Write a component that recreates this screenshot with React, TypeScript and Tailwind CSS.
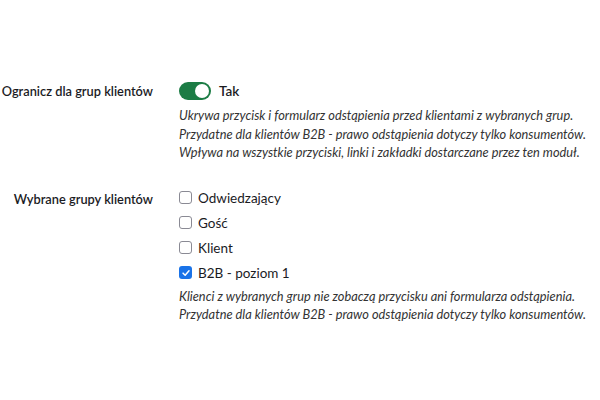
import React from "react";

function Check({ checked }: { checked?: boolean }) {
  return checked ? (
    <span className="flex h-[13px] w-[13px] items-center justify-center rounded-[3px] bg-[#1a73e8]">
      <svg viewBox="0 0 12 12" className="h-[10px] w-[10px]" fill="none" stroke="white" strokeWidth="1.8" strokeLinecap="round" strokeLinejoin="round">
        <path d="M2.5 6.2 L5 8.6 L9.6 3.4" />
      </svg>
    </span>
  ) : (
    <span className="block h-[13px] w-[13px] rounded-[3px] border border-[#8a8a94] bg-white" />
  );
}

export default function App() {
  const items = [
    { label: "Odwiedzający", checked: false },
    { label: "Gość", checked: false },
    { label: "Klient", checked: false },
    { label: "B2B - poziom 1", checked: true },
  ];
  return (
    <div
      className="h-[400px] w-[600px] whitespace-nowrap bg-white text-[#1b1b1f]"
      style={{ fontFamily: 'Lato, "Noto Sans", sans-serif' }}
    >
      <div className="flex flex-col gap-[27px] pt-[81px]">
        <div className="flex">
          <div className="w-[153px] shrink-0 pt-[1px] text-right text-[12.8px] font-semibold leading-[18px]">
            Ogranicz dla grup klientów
          </div>
          <div className="ml-[26px] flex flex-col">
            <div className="flex items-center gap-[8px]">
              <span className="flex h-[18px] w-[32px] items-center justify-end rounded-full bg-[#1c7c45] pr-[2px]">
                <span className="block h-[14px] w-[14px] rounded-full bg-white" />
              </span>
              <span className="text-[13.5px] font-semibold leading-[20px]">Tak</span>
            </div>
            <div className="mt-[5px] text-[12.8px] italic leading-[18.5px] text-[#333]">
              <div>Ukrywa przycisk i formularz odstąpienia przed klientami z wybranych grup.</div>
              <div>Przydatne dla klientów B2B - prawo odstąpienia dotyczy tylko konsumentów.</div>
              <div>Wpływa na wszystkie przyciski, linki i zakładki dostarczane przez ten moduł.</div>
            </div>
          </div>
        </div>
        <div className="flex">
          <div className="w-[153px] shrink-0 pt-[1px] text-right text-[12.8px] font-semibold leading-[18px]">
            Wybrane grupy klientów
          </div>
          <div className="ml-[26px] flex flex-col">
            <div className="flex flex-col gap-[7px]">
              {items.map((it) => (
                <div key={it.label} className="flex h-[18px] items-center gap-[6px]">
                  <Check checked={it.checked} />
                  <span className="text-[13.5px] leading-[18px]">{it.label}</span>
                </div>
              ))}
            </div>
            <div className="mt-[5px] text-[12.8px] italic leading-[18.5px] text-[#333]">
              <div>Klienci z wybranych grup nie zobaczą przycisku ani formularza odstąpienia.</div>
              <div>Przydatne dla klientów B2B - prawo odstąpienia dotyczy tylko konsumentów.</div>
            </div>
          </div>
        </div>
      </div>
    </div>
  );
}
